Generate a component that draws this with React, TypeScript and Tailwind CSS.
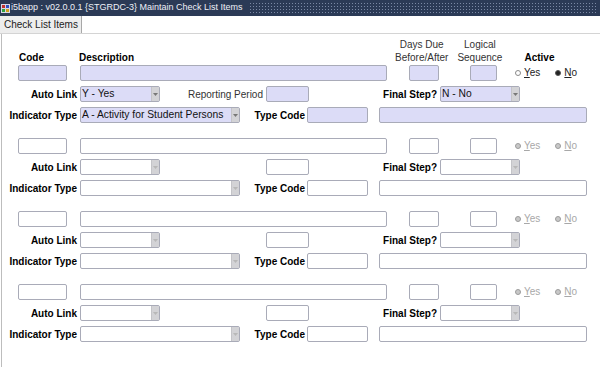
import React from "react";

const FONT = { fontFamily: '"Liberation Sans", Arial, sans-serif' };

function Input({ w, filled }: { w: string; filled: boolean }) {
  return (
    <div
      className={`${w} h-[16px] rounded-[2px] border border-[#a9abb8] ${filled ? "bg-[#dcdcf7]" : "bg-white"}`}
    />
  );
}

function Select({ w, filled, value }: { w: string; filled: boolean; value?: string }) {
  return (
    <div
      className={`${w} h-[16px] rounded-[2px] border border-[#a9abb8] flex items-stretch ${filled ? "bg-[#dcdcf7]" : "bg-white"}`}
    >
      <div className="flex-1 pl-[1px] text-[10.3px] leading-[14px] text-[#111] overflow-hidden whitespace-nowrap">
        {value}
      </div>
      <div className="w-[8px] bg-[#d3d3d6] flex items-center justify-center border-l border-[#c4c4c8]">
        <svg width="5" height="3" viewBox="0 0 5 3">
          <path d="M0 0 L5 0 L2.5 3 Z" fill={filled ? "#777" : "#b8b8b8"} />
        </svg>
      </div>
    </div>
  );
}

function Radio({ label, checked, disabled, first }: { label: string; checked: boolean; disabled: boolean; first: string }) {
  const rest = label.slice(1);
  return (
    <div className="flex items-center">
      {disabled ? (
        <div className="w-[6px] h-[6px] rounded-full bg-[#c8c8c8] border border-[#9c9c9c]" />
      ) : checked ? (
        <div className="w-[6px] h-[6px] rounded-full bg-[#222] border border-[#555]" />
      ) : (
        <div className="w-[6px] h-[6px] rounded-full bg-white border border-[#8a8a8a]" />
      )}
      <span className={`ml-[3px] text-[10px] leading-[12px] ${disabled ? "text-[#a8a8a8]" : "text-[#222]"}`}>
        <span className="underline">{first}</span>
        {rest}
      </span>
    </div>
  );
}

function Group({ filled }: { filled: boolean }) {
  return (
    <div className="flex flex-col gap-[5px]">
      <div className="flex items-center h-[16px]">
        <div className="ml-[18px]">
          <Input w="w-[49px]" filled={filled} />
        </div>
        <div className="ml-[13px]">
          <Input w="w-[307px]" filled={filled} />
        </div>
        <div className="ml-[22px]">
          <Input w="w-[30px]" filled={filled} />
        </div>
        <div className="ml-[31px]">
          <Input w="w-[27px]" filled={filled} />
        </div>
        <div className="ml-[18px]">
          <Radio label="Yes" first="Y" checked={false} disabled={!filled} />
        </div>
        <div className="ml-[15px]">
          <Radio label="No" first="N" checked={true} disabled={!filled} />
        </div>
      </div>
      <div className="flex items-center h-[16px]">
        <div className="w-[77px] text-right font-bold text-[10px] text-black">Auto Link</div>
        <div className="ml-[3px]">
          <Select w="w-[80px]" filled={filled} value={filled ? "Y - Yes" : ""} />
        </div>
        <div className="w-[103px] text-right text-[10px] text-[#333]">{filled ? "Reporting Period" : ""}</div>
        <div className="ml-[3px]">
          <Input w="w-[43px]" filled={filled} />
        </div>
        <div className="w-[128px] text-right font-bold text-[10px] text-black">Final Step?</div>
        <div className="ml-[3px]">
          <Select w="w-[80px]" filled={filled} value={filled ? "N - No" : ""} />
        </div>
      </div>
      <div className="flex items-center h-[16px]">
        <div className="w-[77px] text-right font-bold text-[10px] text-black whitespace-nowrap">Indicator Type</div>
        <div className="ml-[3px]">
          <Select w="w-[160px]" filled={filled} value={filled ? "A - Activity for Student Persons" : ""} />
        </div>
        <div className="w-[65px] text-right font-bold text-[10px] text-black whitespace-nowrap">Type Code</div>
        <div className="ml-[2px]">
          <Input w="w-[61px]" filled={filled} />
        </div>
        <div className="ml-[11px]">
          <Input w="w-[208px]" filled={filled} />
        </div>
      </div>
    </div>
  );
}

export default function App() {
  return (
    <div className="w-[600px] h-[367px] bg-white overflow-hidden flex flex-col" style={FONT}>
      <div className="h-[16px] bg-[#2b3a56] flex items-center">
        <svg width="9" height="9" viewBox="0 0 9 9" className="ml-[1px]">
          <rect x="0" y="0" width="9" height="9" fill="#d8d8e8" />
          <rect x="1" y="1" width="3" height="3" fill="#c03030" />
          <rect x="5" y="1" width="3" height="3" fill="#3050c0" />
          <rect x="1" y="5" width="3" height="3" fill="#30a040" />
          <rect x="5" y="5" width="3" height="3" fill="#d0a020" />
        </svg>
        <span className="ml-[1px] text-[9px] text-[#eef0f6] whitespace-nowrap">
          i5bapp : v02.0.0.1 {"{STGRDC-3}"} Maintain Check List Items
        </span>
        <div className="ml-[6px] mr-[2px] flex-1 h-[12px] bg-[radial-gradient(circle,#7a88a4_0.8px,transparent_1px)] bg-[length:3px_3px]" />
      </div>
      <div className="h-[18px] flex border-b border-[#d4d4d4]">
        <div className="w-[82px] bg-[#ededed] border-r border-[#a8a8a8] text-[10px] leading-[17px] pl-[4px] text-[#222] whitespace-nowrap">
          Check List Items
        </div>
        <div className="flex-1 bg-white" />
      </div>
      <div className="flex-1 ml-[1px] border-l border-[#bdbdbd] relative">
        <div className="pt-[4px] flex text-[10px] leading-[13px]">
          <div className="flex flex-col">
            <div className="h-[13px]" />
            <div className="flex">
              <span className="ml-[17px] font-bold text-black">Code</span>
              <span className="ml-[35px] font-bold text-black">Description</span>
            </div>
          </div>
          <div className="ml-[261px] flex flex-col items-center text-[#333]">
            <span>Days Due</span>
            <span>Before/After</span>
          </div>
          <div className="ml-[9px] flex flex-col items-center text-[#333]">
            <span>Logical</span>
            <span>Sequence</span>
          </div>
          <div className="ml-[22px] flex flex-col">
            <div className="h-[13px]" />
            <span className="font-bold text-black">Active</span>
          </div>
        </div>
        <div className="mt-[1px] flex flex-col gap-[15px] -ml-[2px]">
          <Group filled={true} />
          <Group filled={false} />
          <Group filled={false} />
          <Group filled={false} />
        </div>
      </div>
    </div>
  );
}
